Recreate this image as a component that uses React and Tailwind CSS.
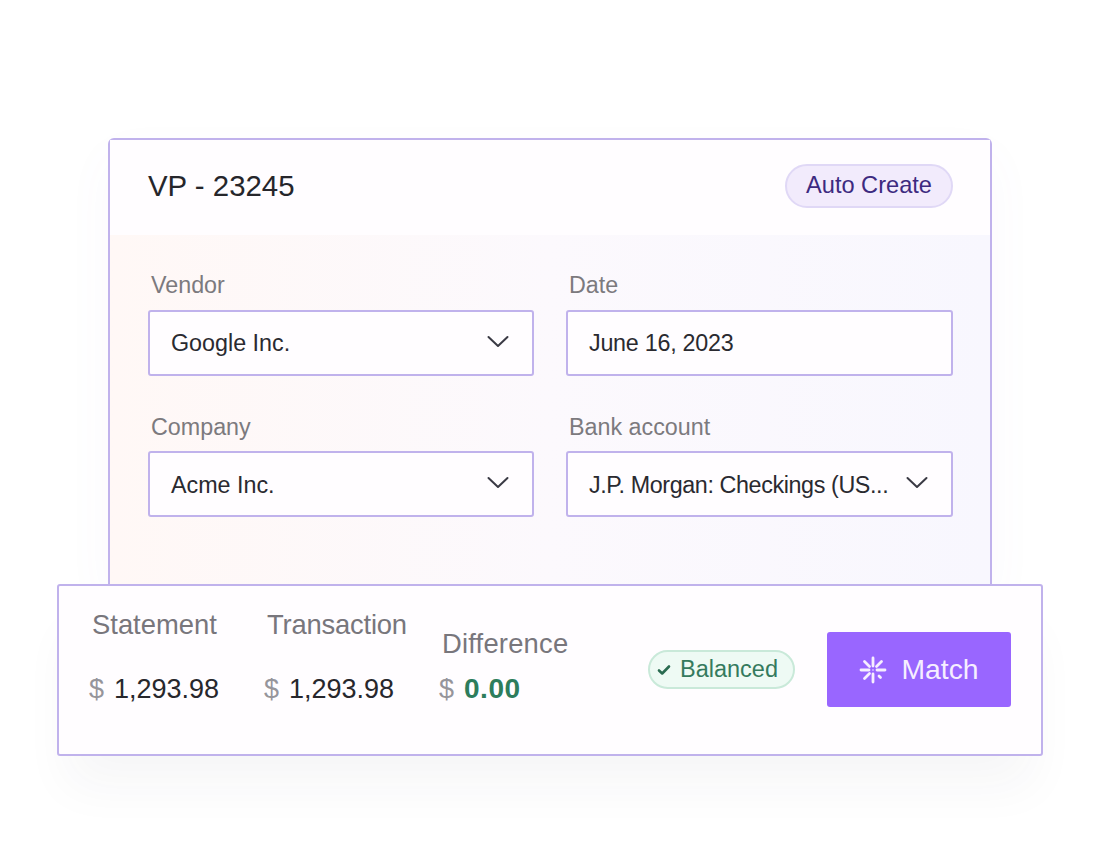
import React from "react";

const Chevron = ({ className = "" }) => (
  <svg className={className} width="22" height="14" viewBox="0 0 22 14" fill="none" stroke="#3a3a44" strokeWidth="2" strokeLinecap="round" strokeLinejoin="round">
    <path d="M1.5 2 L11 11 L20.5 2" />
  </svg>
);

const Spark = () => (
  <svg width="28" height="28" viewBox="0 0 28 28" fill="none" stroke="#f6eeff" strokeWidth="2.8" strokeLinecap="round">
    <path d="M14 2 V10" />
    <path d="M14 18 V26" />
    <path d="M2 14 H10" />
    <path d="M18 14 H26" />
    <path d="M5.5 5.5 L10.5 10.5" />
    <path d="M20 20 L21.5 21.5" />
    <path d="M22.5 5.5 L17.5 10.5" />
    <path d="M10.5 17.5 L5.5 22.5" />
    <circle cx="14" cy="14" r="0.8" fill="#f6eeff" stroke="none" />
  </svg>
);

const Field = ({ label, value, chevron, labelClass = "", valueClass = "" }) => (
  <div className="flex flex-col">
    <div className={`h-[38px] pl-[3px] text-[23.3px] leading-[26px] text-[#7c7a7e] ${labelClass}`}>{label}</div>
    <div className="flex h-[66px] items-center justify-between rounded-[3px] border-2 border-[#c0b2ec] bg-[#fffdff] pl-[21px] pr-[23px]">
      <span className={`whitespace-nowrap text-[23.3px] text-[#2a2a30] ${valueClass}`}>{value}</span>
      {chevron && <Chevron className="mb-[2px]" />}
    </div>
  </div>
);

const Stat = ({ label, value, green, offset, labelClass = "" }) => (
  <div className="flex w-[175px] flex-col">
    <div className={`${offset ? "h-[62px] pt-[19px]" : "h-[62px]"} whitespace-nowrap pl-[3px] text-[27.4px] leading-[32px] text-[#78767c] ${labelClass}`}>{label}</div>
    <div className="whitespace-nowrap text-[27px] leading-[36px]">
      <span className="text-[#96959b]">$</span>
      <span className={green ? "ml-[10px] text-[28px] font-semibold tracking-[0.5px] text-[#2d7d5c]" : "ml-[10px] text-[#27272c]"}>{value}</span>
    </div>
  </div>
);

export default function App() {
  return (
    <div className="h-[864px] w-[1100px] overflow-hidden bg-white pl-[57px] pt-[138px] font-['Liberation_Sans',sans-serif]">
      <div className="ml-[51px] h-[446px] w-[884px] rounded-t-[6px] border-2 border-b-0 border-[#c0b2ec] bg-white shadow-[0_20px_50px_rgba(120,100,180,0.04)]">
        <div className="flex h-[95px] items-center justify-between bg-[#fffdff] pb-[3px] pl-[38px] pr-[37px]">
          <div className="text-[29.4px] text-[#26262b]">VP - 23245</div>
          <div className="flex h-[44px] w-[168px] items-center justify-center rounded-full border-2 border-[#e0d8f6] bg-[#f2ebfc] text-[23.6px] text-[#3d2a80]">Auto Create</div>
        </div>
        <div className="h-[349px] bg-gradient-to-r from-[#fff8f6] via-[#fcf9fd] to-[#f8f7fe] pl-[38px] pt-[37px]">
          <div className="grid w-[805px] grid-cols-[386px_387px] gap-x-[32px] gap-y-[37px]">
            <Field label="Vendor" value="Google Inc." chevron valueClass="pt-px" />
            <Field label="Date" value="June 16, 2023" valueClass="pt-px tracking-[-0.25px]" />
            <Field label="Company" value="Acme Inc." chevron labelClass="pt-px" valueClass="pt-[3px]" />
            <Field label="Bank account" value="J.P. Morgan: Checkings (US..." chevron labelClass="pt-px" valueClass="pt-[3px] tracking-[-0.38px]" />
          </div>
        </div>
      </div>
      <div className="relative flex h-[172px] w-[986px] items-start rounded-[3px] border-2 border-[#c0b2ec] bg-[#fffdff] pl-[30px] pt-[23px] shadow-[0_40px_50px_-10px_rgba(40,40,60,0.045)]">
        <Stat label="Statement" value="1,293.98" />
        <Stat label="Transaction" value="1,293.98" labelClass="tracking-[-0.2px]" />
        <Stat label="Difference" value="0.00" offset green labelClass="tracking-[0.2px]" />
        <div className="ml-[34px] mt-[41px] flex h-[39px] w-[147px] items-center gap-[9px] rounded-full border-2 border-[#c9e9d9] bg-[#eefaf4] pl-[7px] text-[23.5px] text-[#357a5e]">
          <svg width="14" height="12" viewBox="0 0 14 12" fill="none" stroke="#2a6b50" strokeWidth="2.6" strokeLinecap="round" strokeLinejoin="round">
            <path d="M2 6.5 L5.2 9.5 L12 2.5" />
          </svg>
          Balanced
        </div>
        <div className="ml-[32px] mt-[23px] flex h-[75px] w-[184px] items-center justify-center gap-[14px] rounded-[3px] bg-[#9966ff] text-[28.3px] text-[#f6eeff]">
          <Spark />
          Match
        </div>
      </div>
    </div>
  );
}
